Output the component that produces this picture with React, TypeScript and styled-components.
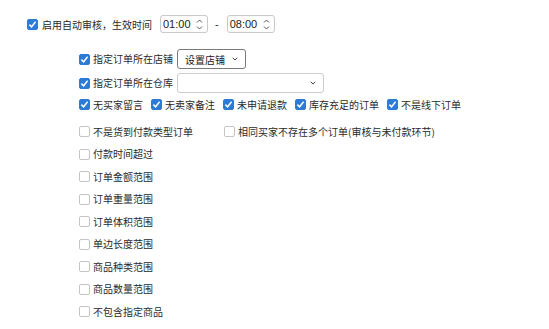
import React from 'react';
import styled, { createGlobalStyle } from 'styled-components';

const GlobalStyle = createGlobalStyle`
    html, body {
        margin: 0;
        padding: 0;
        background: #fff;
    }
    body {
        font-family: "Noto Sans CJK SC", "Liberation Sans", sans-serif;
        color: #2a2a2a;
    }
`;

const Page = styled.div`
    width: 549px;
    height: 329px;
    padding-top: 15px;
    box-sizing: border-box;
    overflow: hidden;
`;

const TopRow = styled.div`
    display: flex;
    align-items: center;
    height: 18px;
    padding-left: 27px;
`;

const Sub = styled.div`
    display: flex;
    flex-direction: column;
    padding-left: 79px;
    margin-top: 16px;
`;

const Row = styled.div<{ $h?: number; $mt?: number }>`
    display: flex;
    align-items: center;
    height: ${(p) => p.$h ?? 22.5}px;
    margin-top: ${(p) => p.$mt ?? 0}px;
`;

const Item = styled.label<{ $w?: number }>`
    display: flex;
    align-items: center;
    gap: 3px;
    font-size: 10px;
    line-height: 14px;
    white-space: nowrap;
    margin-right: 8px;
    ${(p) => (p.$w ? `width: ${p.$w}px; margin-right: 0;` : '')}
`;

const Box = styled.span<{ $on?: boolean }>`
    width: 11px;
    height: 11px;
    flex: none;
    box-sizing: border-box;
    border-radius: 2px;
    border: 1px solid ${(p) => (p.$on ? '#2c7bd6' : '#c4c4c4')};
    background: ${(p) => (p.$on ? '#2c7bd6' : '#fff')};
    display: flex;
    align-items: center;
    justify-content: center;
`;

const Check = ({ on }: { on?: boolean }) => (
    <Box $on={on}>
        {on && (
            <svg width="9" height="9" viewBox="0 0 9 9">
                <path d="M1.4 4.6 L3.6 6.8 L7.6 1.8" fill="none" stroke="#fff" strokeWidth="1.5" />
            </svg>
        )}
    </Box>
);

const Opt = ({ on, text, w }: { on?: boolean; text: string; w?: number }) => (
    <Item $w={w}>
        <Check on={on} />
        <span>{text}</span>
    </Item>
);

const TimeBox = styled.div`
    display: flex;
    align-items: center;
    justify-content: space-between;
    width: 48px;
    height: 18px;
    box-sizing: border-box;
    border: 1px solid #c9c9c9;
    border-radius: 3px;
    padding: 0 4px 0 2px;
    font-family: "Liberation Sans", Arial, sans-serif;
    font-size: 11px;
    color: #222;
`;

const Dash = styled.span`
    font-family: "Liberation Sans", Arial, sans-serif;
    font-size: 11px;
    margin: 0 8px 0 7px;
`;

const Spin = () => (
    <svg width="7" height="11" viewBox="0 0 7 11">
        <path d="M1 3.5 L3.5 1 L6 3.5 M1 7.5 L3.5 10 L6 7.5" fill="none" stroke="#555" strokeWidth="1" />
    </svg>
);

const Time = ({ v }: { v: string }) => (
    <TimeBox>
        <span>{v}</span>
        <Spin />
    </TimeBox>
);

const Select = styled.div<{ $w: number; $dark?: boolean }>`
    display: flex;
    align-items: center;
    justify-content: space-between;
    width: ${(p) => p.$w}px;
    height: 20px;
    box-sizing: border-box;
    border: 1px solid ${(p) => (p.$dark ? '#7a7a7a' : '#cccccc')};
    border-radius: 3px;
    padding: 0 7px 0 7px;
    font-size: 10px;
    color: #222;
    margin-left: -4px;
`;

const Chevron = () => (
    <svg width="6" height="4" viewBox="0 0 6 4">
        <path d="M0.7 0.8 L3 3 L5.3 0.8" fill="none" stroke="#444" strokeWidth="1" />
    </svg>
);

const Label = styled.span`
    font-size: 10px;
    margin-left: 4px;
    margin-right: 8px;
`;

const App = () => (
    <>
        <GlobalStyle />
        <Page>
            <TopRow>
                <Check on />
                <Label>启用自动审核，生效时间</Label>
                <Time v="01:00" />
                <Dash>-</Dash>
                <Time v="08:00" />
            </TopRow>
            <Sub>
                <Row $h={20}>
                    <Opt on text="指定订单所在店铺" />
                    <Select $w={69} $dark>
                        <span>设置店铺</span>
                        <Chevron />
                    </Select>
                </Row>
                <Row $h={20} $mt={4}>
                    <Opt on text="指定订单所在仓库" />
                    <Select $w={147}>
                        <span />
                        <Chevron />
                    </Select>
                </Row>
                <Row $mt={0.5}>
                    <Opt on text="无买家留言" />
                    <Opt on text="无卖家备注" />
                    <Opt on text="未申请退款" />
                    <Opt on text="库存充足的订单" />
                    <Opt on text="不是线下订单" />
                </Row>
                <Row $mt={4.5}>
                    <Opt text="不是货到付款类型订单" w={145} />
                    <Opt text="相同买家不存在多个订单(审核与未付款环节)" />
                </Row>
                <Row>
                    <Opt text="付款时间超过" />
                </Row>
                <Row>
                    <Opt text="订单金额范围" />
                </Row>
                <Row>
                    <Opt text="订单重量范围" />
                </Row>
                <Row>
                    <Opt text="订单体积范围" />
                </Row>
                <Row>
                    <Opt text="单边长度范围" />
                </Row>
                <Row>
                    <Opt text="商品种类范围" />
                </Row>
                <Row>
                    <Opt text="商品数量范围" />
                </Row>
                <Row>
                    <Opt text="不包含指定商品" />
                </Row>
            </Sub>
        </Page>
    </>
);

export default App;
